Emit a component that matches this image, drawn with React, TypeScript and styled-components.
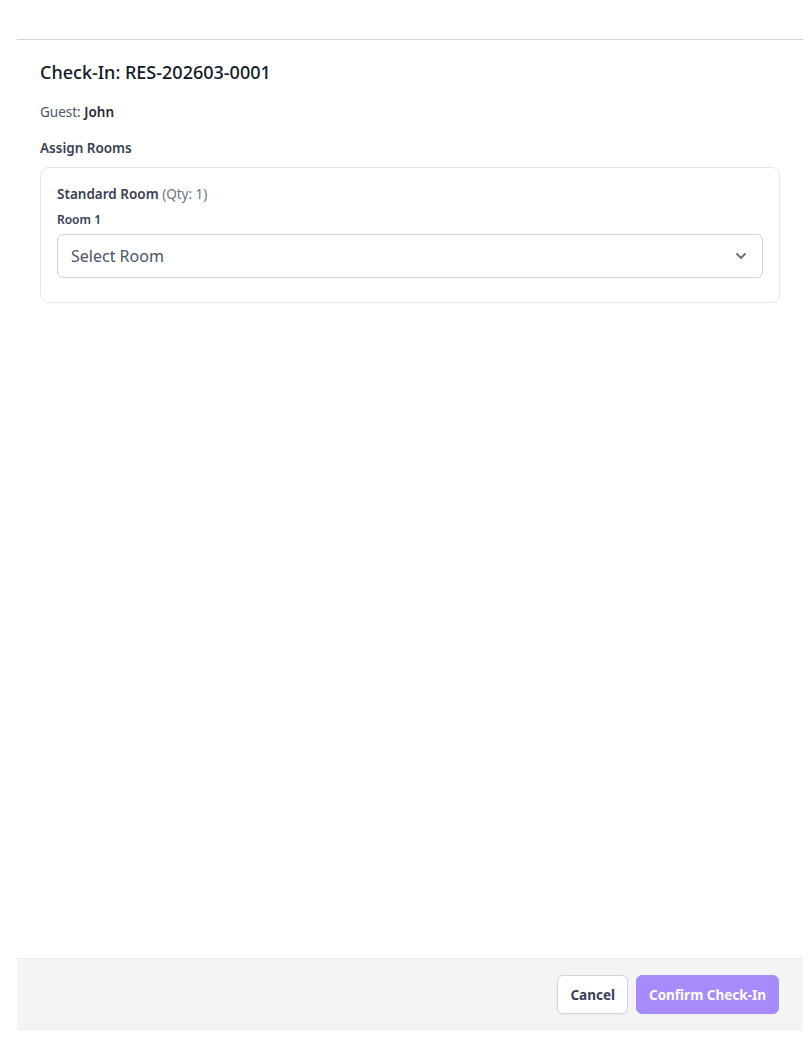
import React from "react";
import styled, { createGlobalStyle } from "styled-components";

const Global = createGlobalStyle`
  html, body { margin: 0; padding: 0; background: #ffffff; }
  body { font-family: "Noto Sans", "Open Sans", sans-serif; }
  * { box-sizing: border-box; }
`;

const Modal = styled.div`
  margin: 39px 0 0 17px;
  width: 786px;
  height: 992px;
  border-top: 1px solid #d6d0d3;
  display: flex;
  flex-direction: column;
  background: #ffffff;
`;

const Body = styled.div`
  flex: 1;
  padding: 18px 23px 0 23px;
  display: flex;
  flex-direction: column;
`;

const Title = styled.h2`
  margin: 0;
  font-size: 18px;
  line-height: 28px;
  font-weight: 500;
  color: #111827;
`;

const GuestLine = styled.div`
  margin-top: 16px;
  font-size: 13.5px;
  line-height: 20px;
  color: #4b5563;
  b { font-weight: 600; color: #1f2937; }
`;

const SectionLabel = styled.div`
  margin-top: 16px;
  font-size: 13.5px;
  line-height: 20px;
  font-weight: 600;
  color: #374151;
`;

const Card = styled.div`
  margin-top: 9px;
  border: 1px solid #e5e7eb;
  border-radius: 8px;
  padding: 16px 16px 24px 16px;
`;

const RoomType = styled.div`
  font-size: 13.5px;
  line-height: 20px;
  color: #6b7280;
  b { font-weight: 600; color: #374151; }
`;

const FieldLabel = styled.div`
  margin-top: 8px;
  font-size: 12px;
  line-height: 16px;
  font-weight: 600;
  color: #374151;
`;

const SelectBox = styled.div`
  margin-top: 6px;
  height: 44px;
  border: 1px solid #d1d5db;
  border-radius: 6px;
  padding: 0 13px 0 13px;
  display: flex;
  align-items: center;
  justify-content: space-between;
  font-size: 16px;
  color: #4b5563;
  background: #ffffff;
`;

const Footer = styled.div`
  height: 73px;
  background: #f3f4f6;
  border-top: 1px solid #e5e7eb;
  display: flex;
  align-items: center;
  justify-content: flex-end;
  gap: 8px;
  padding: 0 24px 1px 0;
`;

const Button = styled.button<{ $primary?: boolean }>`
  height: 39px;
  padding: 0 12px;
  border-radius: 6px;
  font-family: inherit;
  font-size: 13.5px;
  font-weight: 700;
  border: 1px solid ${(p) => (p.$primary ? "#a78bfa" : "#d1d5db")};
  background: ${(p) => (p.$primary ? "#a78bfa" : "#ffffff")};
  color: ${(p) => (p.$primary ? "#ffffff" : "#374151")};
  box-shadow: ${(p) => (p.$primary ? "none" : "0 1px 2px rgba(0,0,0,0.05)")};
`;

const Chevron = () => (
  <svg width="16" height="16" viewBox="0 0 24 24" fill="none" stroke="#6b7280" strokeWidth="3" strokeLinecap="round" strokeLinejoin="round">
    <path d="M6 9l6 6 6-6" />
  </svg>
);

export default function App() {
  return (
    <>
      <Global />
      <Modal>
        <Body>
          <Title>Check-In: RES-202603-0001</Title>
          <GuestLine>
            Guest: <b>John</b>
          </GuestLine>
          <SectionLabel>Assign Rooms</SectionLabel>
          <Card>
            <RoomType>
              <b>Standard Room</b> (Qty: 1)
            </RoomType>
            <FieldLabel>Room 1</FieldLabel>
            <SelectBox>
              <span>Select Room</span>
              <Chevron />
            </SelectBox>
          </Card>
        </Body>
        <Footer>
          <Button>Cancel</Button>
          <Button $primary>Confirm Check-In</Button>
        </Footer>
      </Modal>
    </>
  );
}
